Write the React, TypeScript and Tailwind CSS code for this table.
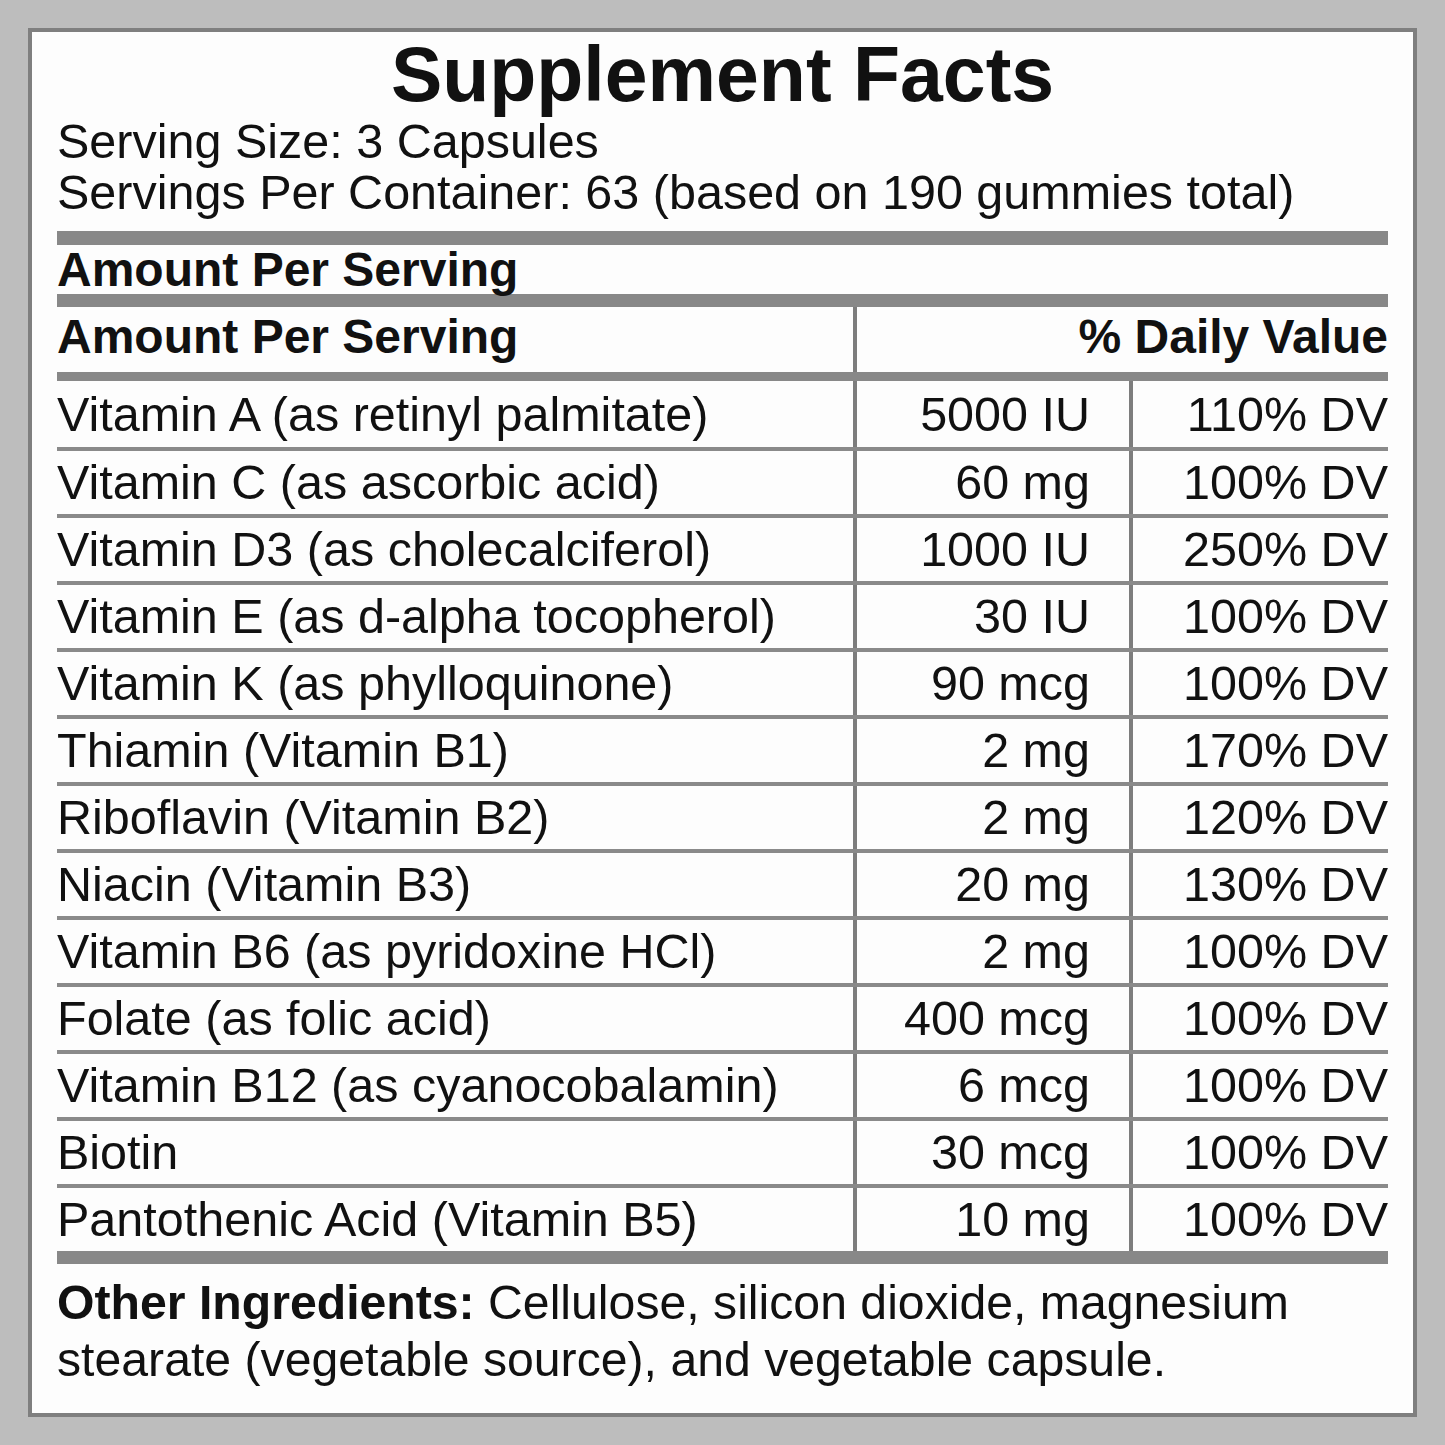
import React from "react";

const rows: [string, string, string][] = [
  ["Vitamin A (as retinyl palmitate)", "5000 IU", "110% DV"],
  ["Vitamin C (as ascorbic acid)", "60 mg", "100% DV"],
  ["Vitamin D3 (as cholecalciferol)", "1000 IU", "250% DV"],
  ["Vitamin E (as d-alpha tocopherol)", "30 IU", "100% DV"],
  ["Vitamin K (as phylloquinone)", "90 mcg", "100% DV"],
  ["Thiamin (Vitamin B1)", "2 mg", "170% DV"],
  ["Riboflavin (Vitamin B2)", "2 mg", "120% DV"],
  ["Niacin (Vitamin B3)", "20 mg", "130% DV"],
  ["Vitamin B6 (as pyridoxine HCl)", "2 mg", "100% DV"],
  ["Folate (as folic acid)", "400 mcg", "100% DV"],
  ["Vitamin B12 (as cyanocobalamin)", "6 mcg", "100% DV"],
  ["Biotin", "30 mcg", "100% DV"],
  ["Pantothenic Acid (Vitamin B5)", "10 mg", "100% DV"],
];

export default function App() {
  return (
    <div
      className="w-[1445px] h-[1445px] bg-[#bdbdbd] p-[28px] text-[#111111]"
      style={{ fontFamily: '"Liberation Sans", Arial, sans-serif' }}
    >
      <div className="h-full border-4 border-[#7f7f7f] bg-[#fdfdfd] px-[25px] pt-[4px]">
        <h1 className="text-center text-[77px] leading-[76px] font-bold">Supplement Facts</h1>
        <div className="mt-[4px] text-[48.5px] leading-[51px]">
          <div>Serving Size: 3 Capsules</div>
          <div>Servings Per Container: 63 (based on 190 gummies total)</div>
        </div>
        <div className="mt-[13px] h-[14px] bg-[#888888]" />
        <div className="h-[49px] text-[48px] leading-[49px] font-bold">Amount Per Serving</div>
        <div className="h-[13px] bg-[#888888]" />
        <div className="grid grid-cols-[796px_535px] h-[65px] text-[48px] leading-[59px] font-bold">
          <div>Amount Per Serving</div>
          <div className="border-l-4 border-[#7d7d7d] text-right">% Daily Value</div>
        </div>
        <div className="h-[9px] bg-[#888888]" />
        <div className="flex flex-col">
          {rows.map(([name, amt, dv], i) => (
            <div
              key={name}
              className={
                i === 0
                  ? "grid grid-cols-[796px_276px_259px] h-[66px] text-[48.5px] leading-[66px]"
                  : "grid grid-cols-[796px_276px_259px] h-[67px] text-[48.5px] leading-[63px] border-t-4 border-[#8a8a8a]"
              }
            >
              <div className="whitespace-nowrap">{name}</div>
              <div className="border-l-4 border-[#7d7d7d] text-right pr-[39px] whitespace-nowrap">{amt}</div>
              <div className="border-l-4 border-[#7d7d7d] text-right whitespace-nowrap">{dv}</div>
            </div>
          ))}
        </div>
        <div className="h-[13px] bg-[#888888]" />
        <p className="mt-[10px] text-[48.2px] leading-[57px]">
          <span className="font-bold">Other Ingredients:</span> Cellulose, silicon dioxide, magnesium
          stearate (vegetable source), and vegetable capsule.
        </p>
      </div>
    </div>
  );
}
